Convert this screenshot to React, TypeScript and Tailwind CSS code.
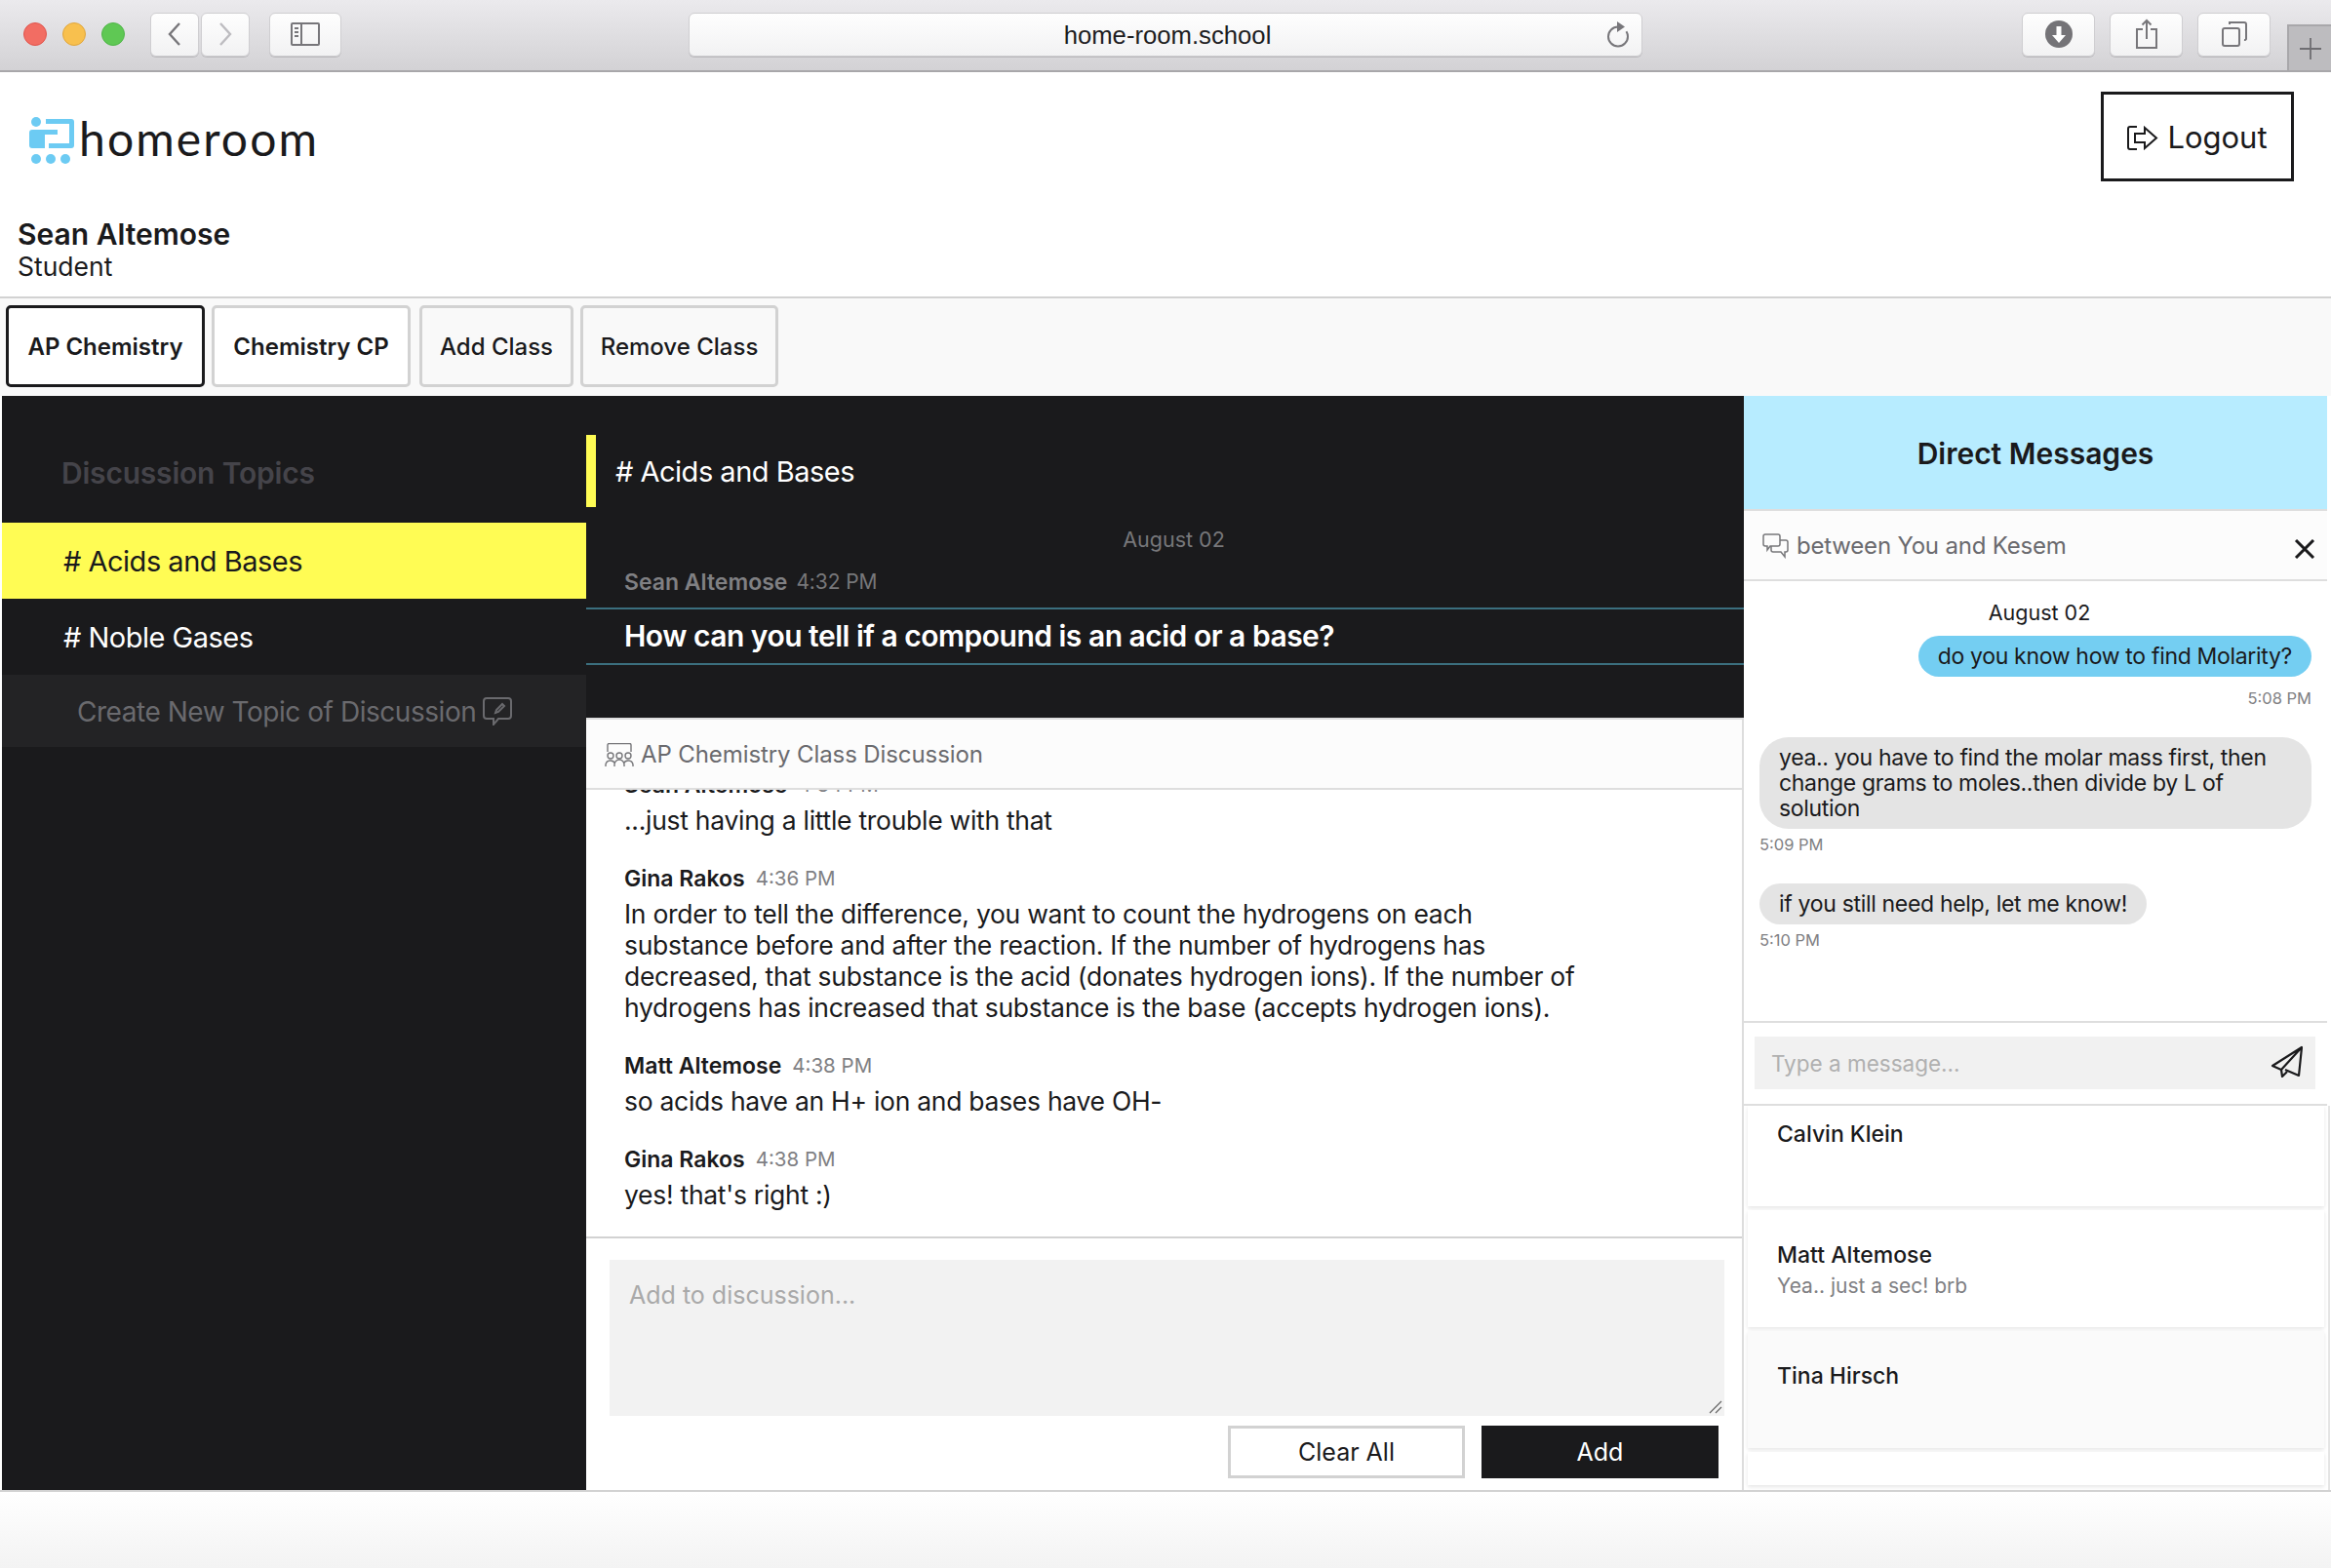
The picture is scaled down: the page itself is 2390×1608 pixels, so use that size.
import type { ReactNode } from 'react'

const font = "font-['Inter','Liberation_Sans',sans-serif]"

function ToolButton({ className, children }: { className: string; children: ReactNode }) {
  return (
    <div className={`flex h-[45px] items-center justify-center rounded-[6px] border border-[#cfced1] bg-gradient-to-b from-[#fefefe] to-[#f2f2f3] shadow-[0_1px_0_#b9b8bb] ${className}`}>
      {children}
    </div>
  )
}

function BrowserBar() {
  return (
    <div className="flex h-[74px] items-center border-b-2 border-[#a8a7aa] bg-gradient-to-b from-[#ebeaed] to-[#d3d2d5] pl-[24px]">
      <div className="mb-[2px] flex items-center gap-[16px]">
        <div className="h-[24px] w-[24px] rounded-full border border-[#e0544c] bg-[#f26d63]" />
        <div className="h-[24px] w-[24px] rounded-full border border-[#e0a63c] bg-[#f8c04e]" />
        <div className="h-[24px] w-[24px] rounded-full border border-[#4fb548] bg-[#5fc854]" />
      </div>
      <div className="mb-[2px] ml-[26px] flex gap-[2px]">
        <ToolButton className="w-[50px]">
          <svg width="16" height="26" viewBox="0 0 16 26" fill="none" stroke="#77767a" strokeWidth="2.4"><path d="M13 2 3 13l10 11" /></svg>
        </ToolButton>
        <ToolButton className="w-[50px]">
          <svg width="16" height="26" viewBox="0 0 16 26" fill="none" stroke="#bdbcc0" strokeWidth="2.4"><path d="m3 2 10 11L3 24" /></svg>
        </ToolButton>
      </div>
      <ToolButton className="mb-[2px] ml-[20px] w-[74px]">
        <svg width="30" height="24" viewBox="0 0 30 24" fill="none" stroke="#77767a" strokeWidth="2"><rect x="1" y="1" width="28" height="22" rx="1" /><path d="M11 1v22" /><path d="M4 6h4M4 10h4M4 14h4" /></svg>
      </ToolButton>
      <ToolButton className="relative mb-[2px] ml-[356px] w-[978px]">
        <span className="pl-[4px] pt-[3px] font-['Liberation_Sans',sans-serif] text-[25.700px] text-[#1d1d1f]">home-room.school</span>
        <svg className="absolute right-[12px] top-[8px]" width="24" height="27" viewBox="0 0 24 27" fill="none" stroke="#77767a" strokeWidth="2"><path d="M12 5.500A10 10 0 1 0 22 15.500c0-2-.6-3.800-1.500-5.300" /><path d="M11 0l8 5.500L11 11z" fill="#77767a" stroke="none" /></svg>
      </ToolButton>
      <ToolButton className="mb-[2px] ml-[389px] w-[75px]">
        <svg width="28" height="28" viewBox="0 0 28 28"><circle cx="14" cy="14" r="14" fill="#747377" /><path d="M11.500 6h5v9H21l-7 8-7-8h4.500z" fill="#fff" /></svg>
      </ToolButton>
      <ToolButton className="mb-[2px] ml-[15px] w-[75px]">
        <svg width="24" height="32" viewBox="0 0 24 32" fill="none" stroke="#77767a" strokeWidth="2"><path d="M8 11H2v19h20V11h-6" /><path d="M12 21V2M7.500 6.500 12 2l4.500 4.500" /></svg>
      </ToolButton>
      <ToolButton className="mb-[2px] ml-[15px] w-[75px]">
        <svg width="26" height="26" viewBox="0 0 26 26" fill="none" stroke="#77767a" strokeWidth="2"><rect x="1" y="7" width="17" height="18" rx="2" /><path d="M8 3V1h15a2 2 0 0 1 2 2v15a2 2 0 0 1-2 1" /></svg>
      </ToolButton>
      <div className="ml-[17px] flex h-[47px] w-[45px] items-center justify-center self-end border-l-2 border-t-2 border-[#a8a7aa] bg-[#bdbcbf]">
        <svg width="24" height="24" viewBox="0 0 24 24" stroke="#6f6e72" strokeWidth="1.800"><path d="M12 1v22M1 12h22" /></svg>
      </div>
    </div>
  )
}

function Logo() {
  return (
    <div className="flex items-center">
      <svg width="46" height="48" viewBox="0 0 46 48" fill="#6ccbf3">
        <circle cx="7" cy="5" r="5" />
        <path d="M3 13h26v5H16v14H3a3 3 0 0 1-3-3V16a3 3 0 0 1 3-3z" />
        <path d="M17 2h26a3 3 0 0 1 3 3v24a3 3 0 0 1-3 3H20v-5h21V7H17z" />
        <circle cx="7" cy="43" r="5" />
        <circle cx="22" cy="43" r="5" />
        <circle cx="37" cy="43" r="5" />
      </svg>
      <span className="-mt-[6px] ml-[5px] font-['Lato',sans-serif] text-[48px] leading-[49px] tracking-[2.100px] text-[#1a1a1c]">homeroom</span>
    </div>
  )
}

function Tab({ label, variant }: { label: string; variant: 'active' | 'open' | 'add' | 'remove' }) {
  const styles = {
    active: 'border-[#1a1a1c] bg-white w-[204px] font-semibold text-[24px]',
    open: 'border-[#d2d2d2] bg-white w-[204px] font-semibold text-[24px]',
    add: 'border-[#d2d2d2] bg-[#f9f9f9] w-[158px] font-medium text-[24px]',
    remove: 'border-[#d2d2d2] bg-[#f9f9f9] w-[203px] font-medium text-[24px]',
  }
  return (
    <div className={`flex h-[84px] items-center justify-center rounded-[5px] border-[3px] pt-[2px] text-[#1a1a1c] ${styles[variant]}`}>
      {label}
    </div>
  )
}

function Sidebar() {
  return (
    <div className="w-[599px] shrink-0 bg-[#1a1a1c] pt-[40px]">
      <div className="flex h-[90px] items-center pb-[12px] pl-[61px] text-[30px] font-semibold tracking-[-0.2px] text-[#45444a]">Discussion Topics</div>
      <div className="flex h-[78px] items-center bg-[#fffc54] pl-[63px] pt-[2px] text-[29px] tracking-[-0.5px] text-[#1a1a1c]">
        # Acids and Bases
      </div>
      <div className="flex h-[78px] items-center pl-[63px] pt-[2px] text-[29px] tracking-[-0.5px] text-white"># Noble Gases</div>
      <div className="flex h-[74px] items-center bg-[#232325] pl-[77px] pt-[2px] text-[28px] tracking-[-0.46px] text-[#6a6a6e]">
        Create New Topic of Discussion
        <svg className="-mt-[2px] ml-[7px]" width="30" height="29" viewBox="0 0 30 29" fill="none" stroke="#6a6a6e" strokeWidth="2"><path d="M4 1h22a3 3 0 0 1 3 3v15a3 3 0 0 1-3 3H16l-5 6v-6H4a3 3 0 0 1-3-3V4a3 3 0 0 1 3-3z" /><path d="m13 16 1-3 6-6 2 2-6 6z" /></svg>
      </div>
    </div>
  )
}

function Post({ name, time, children, className }: { name: string; time: string; children: ReactNode; className?: string }) {
  return (
    <div className={className}>
      <div className="flex h-[30px] items-center">
        <span className="text-[23px] font-semibold text-[#1a1a1c]">{name}</span>
        <span className="ml-[11px] text-[20.500px] text-[#808083]">{time}</span>
      </div>
      <div className="mt-[5px] text-[26.500px] leading-[32px] tracking-[-0.28px] text-[#1a1a1c]">{children}</div>
    </div>
  )
}

function ClassIcon() {
  return (
    <svg width="30" height="24" viewBox="0 0 30 24" fill="none" stroke="#77777a" strokeWidth="1.400">
      <path d="M3 9V2a1.500 1.500 0 0 1 1.500-1.500h21A1.500 1.500 0 0 1 27 2v7" />
      <circle cx="6" cy="13" r="3" />
      <circle cx="15" cy="13" r="3" />
      <circle cx="24" cy="13" r="3" />
      <path d="M1 24v-2a5 5 0 0 1 9.500-1M10 24v-2a5 5 0 0 1 10 0v2M19.500 21a5 5 0 0 1 9.500 1v2" />
    </svg>
  )
}

function Discussion() {
  return (
    <div className="flex w-[1187px] shrink-0 flex-col">
      <div className="h-[330px] bg-[#1a1a1c] pt-[40px]">
        <div className="flex h-[74px] items-center border-l-[10px] border-[#fffc54] pl-[20px] pt-[2px] text-[29px] tracking-[-0.5px] text-white"># Acids and Bases</div>
        <div className="mt-[20px] flex h-[26px] items-center justify-center pl-[18px] text-[21.500px] text-[#77777a]">August 02</div>
        <div className="mt-[17px] flex h-[26px] items-center pl-[39px] pt-[2px]">
          <span className="text-[23px] font-semibold text-[#808083]">Sean Altemose</span>
          <span className="ml-[9px] text-[21px] tracking-[-0.1px] text-[#77777a]">4:32 PM</span>
        </div>
        <div className="mt-[14px] flex h-[59px] items-center border-y-2 border-[#3b6f7e] pl-[39px] text-[30px] font-semibold tracking-[-0.5px] text-white">
          How can you tell if a compound is an acid or a base?
        </div>
      </div>
      <div className="flex flex-1 flex-col border-r-2 border-[#dddddd] bg-white">
        <div className="flex h-[74px] shrink-0 items-center gap-[7px] border-y-2 border-[#dedede] bg-[#fcfcfc] pl-[19px] pt-[2px] text-[24px] tracking-[-0.1px] text-[#6a6a6e]">
          <ClassIcon />
          AP Chemistry Class Discussion
        </div>
        <div className="flex h-[458px] flex-col justify-end overflow-hidden pb-[27px] pl-[39px]">
          <Post name="Sean Altemose" time="4:34 PM">...just having a little trouble with that</Post>
          <Post name="Gina Rakos" time="4:36 PM" className="mt-[29px]">
            <div className="w-[990px]">
              In order to tell the difference, you want to count the hydrogens on each substance before and after the reaction. If the number of hydrogens has decreased, that substance is the acid (donates hydrogen ions). If the number of hydrogens has increased that substance is the base (accepts hydrogen ions).
            </div>
          </Post>
          <Post name="Matt Altemose" time="4:38 PM" className="mt-[29px]">so acids have an H+ ion and bases have OH-</Post>
          <Post name="Gina Rakos" time="4:38 PM" className="mt-[29px]">yes! that's right :)</Post>
        </div>
        <div className="flex flex-1 flex-col border-t-2 border-[#d2d2d2] pl-[24px] pr-[18px] pt-[22px]">
          <div className="relative">
            <textarea readOnly placeholder="Add to discussion..." className="block h-[160px] w-full resize-none bg-[#f2f2f2] px-[20px] py-[20px] text-[25px] leading-[32px] outline-none placeholder:text-[#a9a9a9]" />
            <svg className="absolute bottom-[2px] right-[2px]" width="14" height="14" viewBox="0 0 14 14" stroke="#666" strokeWidth="1.200"><path d="M1 13 13 1M7 13l6-6" /></svg>
          </div>
          <div className="mr-[6px] mt-[10px] flex justify-end gap-[17px]">
            <div className="flex h-[54px] w-[243px] items-center justify-center border-[3px] border-[#d2d2d2] bg-white pt-[1px] text-[25px] text-[#1a1a1c]">Clear All</div>
            <div className="flex h-[54px] w-[243px] items-center justify-center bg-[#1a1a1c] pt-[1px] text-[25px] text-white">Add</div>
          </div>
        </div>
      </div>
    </div>
  )
}

function Contact({ name, preview, className }: { name: string; preview?: string; className: string }) {
  return (
    <div className={`px-[30px] shadow-[0_2px_4px_rgba(0,0,0,0.1)] ${className}`}>
      <div className="text-[23px] font-medium leading-[26px] text-[#1a1a1c]">{name}</div>
      {preview && <div className="mt-[6px] text-[21px] leading-[26px] text-[#808083]">{preview}</div>}
    </div>
  )
}

function DirectMessages() {
  const bubbleText = 'text-[23px] tracking-[-0.32px] text-[#1a1a1c]'
  return (
    <div className="flex flex-1 flex-col bg-white">
      <div className="mr-[4px] flex h-[116px] shrink-0 items-center justify-center bg-[#b7ecff] pt-[2px] text-[30px] font-semibold text-[#1a1a1c]">Direct Messages</div>
      <div className="relative mr-[4px] flex h-[74px] shrink-0 items-center gap-[7px] border-y-2 border-[#dedede] bg-[#fcfcfc] pl-[19px] pt-[2px] text-[24px] tracking-[-0.2px] text-[#6a6a6e]">
        <svg width="28" height="26" viewBox="0 0 28 26" fill="none" stroke="#77777a" strokeWidth="1.500">
          <path d="M3 1h13a2 2 0 0 1 2 2v8a2 2 0 0 1-2 2H8l-3 4v-4H3a2 2 0 0 1-2-2V3a2 2 0 0 1 2-2z" />
          <path d="M18 7h6a2 2 0 0 1 2 2v8a2 2 0 0 1-2 2h-1v5l-4-5h-8a2 2 0 0 1-2-2v-4" />
        </svg>
        between You and Kesem
        <svg className="absolute right-[12px] top-[29px]" width="22" height="20" viewBox="0 0 22 20" stroke="#1a1a1c" strokeWidth="3"><path d="m2 1 18 18M20 1 2 19" /></svg>
      </div>
      <div className="mr-[4px] flex h-[451px] shrink-0 flex-col px-[16px] pt-[18px]">
        <div className="flex h-[28px] items-center justify-center pl-[8px] text-[21.500px] text-[#1a1a1c]">August 02</div>
        <div className="mt-[10px] flex justify-end">
          <div className={`flex h-[42px] items-center rounded-full bg-[#74cef2] px-[20px] ${bubbleText}`}>do you know how to find Molarity?</div>
        </div>
        <div className="mt-[11px] flex h-[22px] items-center justify-end text-[16.500px] text-[#808083]">5:08 PM</div>
        <div className={`mt-[29px] rounded-[30px] bg-[#e4e4e4] px-[20px] py-[8px] leading-[26px] ${bubbleText}`}>
          yea.. you have to find the molar mass first, then change grams to moles..then divide by L of solution
        </div>
        <div className="mt-[5px] flex h-[22px] items-center text-[16.500px] text-[#808083]">5:09 PM</div>
        <div className="mt-[29px] flex">
          <div className={`flex h-[42px] items-center rounded-full bg-[#e4e4e4] px-[20px] ${bubbleText}`}>if you still need help, let me know!</div>
        </div>
        <div className="mt-[5px] flex h-[22px] items-center text-[16.500px] text-[#808083]">5:10 PM</div>
      </div>
      <div className="mr-[4px] h-[87px] shrink-0 border-y-2 border-[#dedede] pl-[11px] pr-[12px] pt-[14px]">
        <div className="relative">
          <input readOnly placeholder="Type a message..." className="h-[54px] w-full bg-[#f1f1f1] px-[17px] text-[22.500px] outline-none placeholder:text-[#b0b0b0]" />
          <svg className="absolute right-[13px] top-[9px]" width="33" height="34" viewBox="0 0 33 34" fill="none" stroke="#1a1a1c" strokeWidth="2.200" strokeLinejoin="round"><path d="M32 2 2 21l9 4 21-23-3 29-14-6" /><path d="m11 25 1 7 5-5" /></svg>
        </div>
      </div>
      <div className="mr-px flex flex-1 flex-col gap-[4px] overflow-hidden border-r-2 border-[#e4e4e4] pl-[4px] pr-[4px]">
        <Contact name="Calvin Klein" className="h-[103px] shrink-0 bg-white pt-[16px]" />
        <Contact name="Matt Altemose" preview="Yea.. just a sec! brb" className="h-[120px] shrink-0 bg-white pt-[33px]" />
        <Contact name="Tina Hirsch" className="h-[120px] shrink-0 bg-[#fafafa] pt-[33px]" />
        <Contact name="" className="h-[34px] shrink-0 bg-white" />
      </div>
    </div>
  )
}

export default function App() {
  return (
    <div className={`flex h-[1608px] w-[2390px] flex-col overflow-hidden bg-white ${font}`}>
      <BrowserBar />
      <div className="flex h-[230px] shrink-0 items-start justify-between pl-[18px] pr-[38px]">
        <div>
          <div className="ml-[12px] mt-[46px]"><Logo /></div>
          <div className="mt-[54px] text-[30px] font-semibold leading-[36px] text-[#1a1a1c]">Sean Altemose</div>
          <div className="text-[26.500px] leading-[30px] text-[#1a1a1c]">Student</div>
        </div>
        <div className="mt-[20px] flex h-[92px] w-[198px] items-center justify-center gap-[9px] border-[3px] border-[#1a1a1c] pt-[2px] text-[31px] text-[#1a1a1c]">
          <svg width="32" height="25" viewBox="0 0 32 25" fill="none" stroke="#1a1a1c" strokeWidth="2"><path d="M10 1H3a2 2 0 0 0-2 2v19a2 2 0 0 0 2 2h7" /><path d="M8 8h10V2l12 10.500L18 23v-6H8z" /></svg>
          Logout
        </div>
      </div>
      <div className="flex h-[102px] shrink-0 gap-[7px] border-t-2 border-[#d2d2d2] bg-[#f9f9f9] pl-[6px] pt-[7px]">
        <Tab label="AP Chemistry" variant="active" />
        <Tab label="Chemistry CP" variant="open" />
        <div className="ml-[2px]"><Tab label="Add Class" variant="add" /></div>
        <Tab label="Remove Class" variant="remove" />
      </div>
      <div className="flex h-[1122px] shrink-0 pl-[2px]">
        <Sidebar />
        <Discussion />
        <DirectMessages />
      </div>
      <div className="flex-1 border-t-2 border-[#d2d2d2] bg-gradient-to-b from-white to-[#f3f3f3]" />
    </div>
  )
}
